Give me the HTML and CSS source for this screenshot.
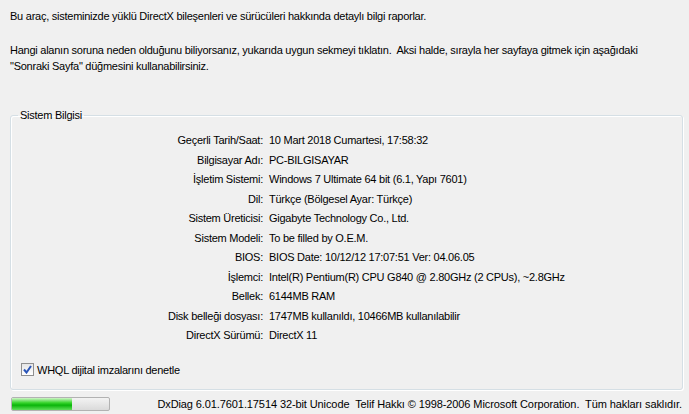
FILE: index.html
```html
<!DOCTYPE html>
<html lang="tr">
<head>
    <meta charset="UTF-8">
    <title>DirectX Tanı Aracı - Sistem</title>
    <link rel="stylesheet" href="styles.css">
</head>
<body>
    <p class="intro">Bu araç, sisteminizde yüklü DirectX bileşenleri ve sürücüleri hakkında detaylı bilgi raporlar.</p>
    <p class="intro">Hangi alanın soruna neden olduğunu biliyorsanız, yukarıda uygun sekmeyi tıklatın.&nbsp; Aksi halde, sırayla her sayfaya gitmek için aşağıdaki<br>"Sonraki Sayfa" düğmesini kullanabilirsiniz.</p>

    <fieldset class="group">
        <legend>Sistem Bilgisi</legend>
        <div class="info">
            <span class="key">Geçerli Tarih/Saat:</span><span>10 Mart 2018 Cumartesi, 17:58:32</span>
            <span class="key">Bilgisayar Adı:</span><span>PC-BILGISAYAR</span>
            <span class="key">İşletim Sistemi:</span><span>Windows 7 Ultimate 64 bit (6.1, Yapı 7601)</span>
            <span class="key">Dil:</span><span>Türkçe (Bölgesel Ayar: Türkçe)</span>
            <span class="key">Sistem Üreticisi:</span><span>Gigabyte Technology Co., Ltd.</span>
            <span class="key">Sistem Modeli:</span><span>To be filled by O.E.M.</span>
            <span class="key">BIOS:</span><span>BIOS Date: 10/12/12 17:07:51 Ver: 04.06.05</span>
            <span class="key">İşlemci:</span><span>Intel(R) Pentium(R) CPU G840 @ 2.80GHz (2 CPUs), ~2.8GHz</span>
            <span class="key">Bellek:</span><span>6144MB RAM</span>
            <span class="key">Disk belleği dosyası:</span><span>1747MB kullanıldı, 10466MB kullanılabilir</span>
            <span class="key">DirectX Sürümü:</span><span>DirectX 11</span>
        </div>
        <label class="check">
            <span class="box">
                <svg width="9" height="9" viewBox="0 0 9 9"><path d="M1 4.5 L3.5 7.5 L8 1" fill="none" stroke="#2a55b8" stroke-width="2"/></svg>
            </span>
            WHQL dijital imzalarını denetle
        </label>
    </fieldset>

    <div class="footer">
        <div class="progress"><div class="fill" style="width: 62%"></div></div>
        <span class="copy">DxDiag 6.01.7601.17514 32-bit Unicode&nbsp; Telif Hakkı © 1998-2006 Microsoft Corporation.&nbsp; Tüm hakları saklıdır.</span>
    </div>
</body>
</html>
```
FILE: styles.css
```css
html, body { background: #f0f0f0; }
body { margin: 0; padding: 8px 6px 0 10px; font-family: "Liberation Sans", Arial, sans-serif; font-size: 11px; letter-spacing: -0.25px; line-height: 16px; color: #000; overflow: hidden; }
.intro { margin: 0 0 18px; white-space: nowrap; }
.group { margin: 33px 0 0; padding: 0 0 11px 7px; border: 1px solid #d5dfe5; border-radius: 3px; box-shadow: inset 1px 1px 0 #fff, 1px 1px 0 #fff; }
.group legend { padding: 0 2px; }
.info { display: grid; grid-template-columns: 245px 1fr; column-gap: 6px; line-height: 19.5px; margin-top: 8px; }
.key { text-align: right; }
.check { display: flex; align-items: center; gap: 3px; margin: 16px 0 0 3px; }
.box { width: 11px; height: 11px; border: 1px solid #8f8f8f; background: linear-gradient(#e6e6e6, #fff); display: flex; align-items: center; justify-content: center; }
.footer { display: flex; align-items: center; justify-content: space-between; margin-top: 6px; }
.progress { width: 97px; height: 12px; border: 1px solid #b2b2b2; border-radius: 2px; background: linear-gradient(#f3f3f3, #dadada); overflow: hidden; margin-left: 1px; }
.fill { height: 100%; background: linear-gradient(#cff5c8, #37d42c 40%, #0ab50a 60%, #5fdf58); }
.copy { margin-right: 1px; letter-spacing: -0.1px; }
```
